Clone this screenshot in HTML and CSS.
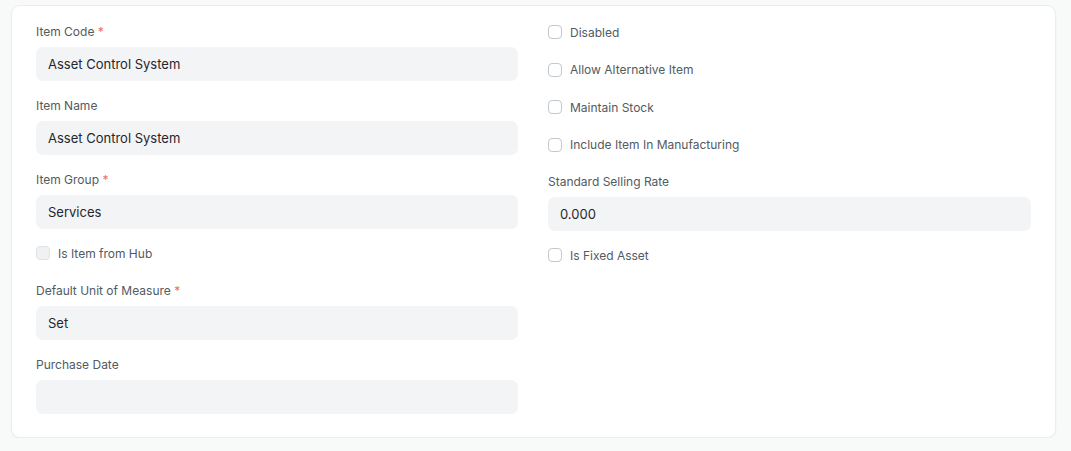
FILE: index.html
```html
<!DOCTYPE html>
<html>
<head>
<meta charset="utf-8">
<link rel="stylesheet" href="styles.css">
</head>
<body>
<div class="card">
  <div class="col">
    <div class="field">
      <div class="label">Item Code <span class="req">*</span></div>
      <div class="input">Asset Control System</div>
    </div>
    <div class="field">
      <div class="label">Item Name</div>
      <div class="input">Asset Control System</div>
    </div>
    <div class="field">
      <div class="label">Item Group <span class="req">*</span></div>
      <div class="input">Services</div>
    </div>
    <div class="check after-input">
      <span class="box disabled"></span><span class="ctext">Is Item from Hub</span>
    </div>
    <div class="field">
      <div class="label">Default Unit of Measure <span class="req">*</span></div>
      <div class="input">Set</div>
    </div>
    <div class="field last">
      <div class="label">Purchase Date</div>
      <div class="input"></div>
    </div>
  </div>
  <div class="col">
    <div class="check"><span class="box"></span><span class="ctext">Disabled</span></div>
    <div class="check"><span class="box"></span><span class="ctext">Allow Alternative Item</span></div>
    <div class="check"><span class="box"></span><span class="ctext">Maintain Stock</span></div>
    <div class="check"><span class="box"></span><span class="ctext">Include Item In Manufacturing</span></div>
    <div class="field">
      <div class="label">Standard Selling Rate</div>
      <div class="input">0.000</div>
    </div>
    <div class="check after-input"><span class="box"></span><span class="ctext">Is Fixed Asset</span></div>
  </div>
</div>
</body>
</html>
```
FILE: styles.css
```css
html, body {
  margin: 0;
  padding: 0;
  background: #f8f9f9;
  font-family: Inter, "Noto Sans", sans-serif;
}
.card {
  margin: 5px 15px 0 11px;
  height: 433px;
  box-sizing: border-box;
  background: #fff;
  border: 1px solid #ebeef0;
  border-radius: 9px;
  box-shadow: 0 1px 2px rgba(0,0,0,0.05);
  padding: 18px 24px 0 24px;
  display: grid;
  grid-template-columns: 482px 483px;
  column-gap: 30px;
}
.col {
  display: flex;
  flex-direction: column;
}
.field {
  margin-bottom: 17px;
}
.label {
  height: 16px;
  line-height: 16px;
  font-size: 12px;
  color: #525a62;
  margin-bottom: 7px;
}
.req {
  color: #e96d6d;
}
.input {
  height: 34px;
  line-height: 34px;
  background: #f3f4f5;
  border-radius: 7px;
  padding: 0 12px;
  font-size: 13px;
  color: #1f272e;
}
.check {
  height: 16px;
  display: flex;
  align-items: center;
  margin-bottom: 21.5px;
}
.check.after-input {
  margin-top: -1px;
}
.box {
  width: 12px;
  height: 12px;
  border: 1px solid #c2c8ce;
  border-radius: 4px;
  background: #fff;
  margin-right: 8px;
  flex: none;
}
.box.disabled {
  background: #f0f1f2;
  border-color: #dfe2e5;
}
.ctext {
  font-size: 12px;
  color: #525a62;
}
```
